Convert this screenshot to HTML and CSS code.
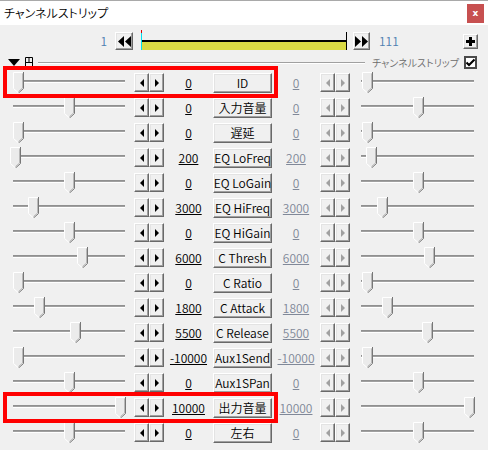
FILE: index.html
```html
<!DOCTYPE html>
<html lang="ja">
<head>
<meta charset="utf-8">
<title>チャンネルストリップ</title>
<link rel="stylesheet" href="styles.css">
</head>
<body>
<svg class="defs" width="0" height="0" aria-hidden="true">
  <symbol id="thumb" viewBox="0 0 11 21">
    <path d="M0.5 16.5V0.5H10.5V16.5L5.5 20.5Z" fill="#ebebeb"/>
    <path d="M0.5 16.5V0.5H10" fill="none" stroke="#ffffff"/>
    <path d="M10.5 0V16.5L5.5 21" fill="none" stroke="#777777"/>
    <path d="M9.5 1.5V16L5.5 19.5" fill="none" stroke="#b9b9b9"/>
    <path d="M0.5 16.5L5 20.5" fill="none" stroke="#ffffff"/>
  </symbol>
  <symbol id="tl" viewBox="0 0 4 8"><path d="M4 0V8L0 4Z"/></symbol>
  <symbol id="tr" viewBox="0 0 4 8"><path d="M0 0V8L4 4Z"/></symbol>
</svg>

<header class="titlebar">
  <span class="title">チャンネルストリップ</span>
  <span class="close">x</span>
</header>

<div class="toolbar">
  <span class="frame-num start">1</span>
  <span class="tbtn prev"><svg width="13" height="11" viewBox="0 0 13 11"><path d="M6 0V11L0 5.5Z M13 0V11L7 5.5Z"/></svg></span>
  <div class="timeline"><span class="cursor"></span></div>
  <span class="tbtn next"><svg width="13" height="11" viewBox="0 0 13 11"><path d="M0 0V11L6 5.5Z M7 0V11L13 5.5Z"/></svg></span>
  <span class="frame-num end">111</span>
  <span class="tbtn plus"><svg width="11" height="11" viewBox="0 0 11 11"><path d="M4 1H7V4H10V7H7V10H4V7H1V4H4Z"/></svg></span>
</div>

<div class="layer">
  <svg class="fold" width="12" height="7" viewBox="0 0 12 7"><path d="M0 0H12L6 7Z"/></svg>
  <svg class="mouse" width="10" height="14" viewBox="0 0 10 14"><path d="M1.5 13.5V1.5H8.5V13.5Z M1.5 6.5H8.5 M5 1.5V6.5" fill="none" stroke="#000"/></svg>
  <span class="rule"></span>
  <span class="layer-name">チャンネルストリップ</span>
  <span class="check"><svg width="9" height="9" viewBox="0 0 9 9"><path d="M0.5 4.5L3 7L8.5 1.5" fill="none" stroke="#000" stroke-width="2"/></svg></span>
</div>

<main class="rows">
  <div class="row">
    <div class="slider"><span class="track"></span><svg class="thumb" style="left:1px"><use href="#thumb"/></svg></div>
    <div class="arrows"><span class="abtn"><svg><use href="#tl"/></svg></span><span class="abtn"><svg><use href="#tr"/></svg></span></div>
    <span class="val"><span>0</span></span>
    <span class="name">ID</span>
    <span class="val off"><span>0</span></span>
    <div class="arrows off"><span class="abtn"><svg><use href="#tl"/></svg></span><span class="abtn"><svg><use href="#tr"/></svg></span></div>
    <div class="slider right"><span class="track"></span><svg class="thumb" style="left:1px"><use href="#thumb"/></svg></div>
  </div>
  <div class="row">
    <div class="slider"><span class="track"></span><svg class="thumb" style="left:52px"><use href="#thumb"/></svg></div>
    <div class="arrows"><span class="abtn"><svg><use href="#tl"/></svg></span><span class="abtn"><svg><use href="#tr"/></svg></span></div>
    <span class="val"><span>0</span></span>
    <span class="name">入力音量</span>
    <span class="val off"><span>0</span></span>
    <div class="arrows off"><span class="abtn"><svg><use href="#tl"/></svg></span><span class="abtn"><svg><use href="#tr"/></svg></span></div>
    <div class="slider right"><span class="track"></span><svg class="thumb" style="left:52px"><use href="#thumb"/></svg></div>
  </div>
  <div class="row">
    <div class="slider"><span class="track"></span><svg class="thumb" style="left:1px"><use href="#thumb"/></svg></div>
    <div class="arrows"><span class="abtn"><svg><use href="#tl"/></svg></span><span class="abtn"><svg><use href="#tr"/></svg></span></div>
    <span class="val"><span>0</span></span>
    <span class="name">遅延</span>
    <span class="val off"><span>0</span></span>
    <div class="arrows off"><span class="abtn"><svg><use href="#tl"/></svg></span><span class="abtn"><svg><use href="#tr"/></svg></span></div>
    <div class="slider right"><span class="track"></span><svg class="thumb" style="left:1px"><use href="#thumb"/></svg></div>
  </div>
  <div class="row">
    <div class="slider"><span class="track"></span><svg class="thumb" style="left:-2px"><use href="#thumb"/></svg></div>
    <div class="arrows"><span class="abtn"><svg><use href="#tl"/></svg></span><span class="abtn"><svg><use href="#tr"/></svg></span></div>
    <span class="val"><span>200</span></span>
    <span class="name">EQ LoFreq</span>
    <span class="val off"><span>200</span></span>
    <div class="arrows off"><span class="abtn"><svg><use href="#tl"/></svg></span><span class="abtn"><svg><use href="#tr"/></svg></span></div>
    <div class="slider right"><span class="track"></span><svg class="thumb" style="left:5px"><use href="#thumb"/></svg></div>
  </div>
  <div class="row">
    <div class="slider"><span class="track"></span><svg class="thumb" style="left:52px"><use href="#thumb"/></svg></div>
    <div class="arrows"><span class="abtn"><svg><use href="#tl"/></svg></span><span class="abtn"><svg><use href="#tr"/></svg></span></div>
    <span class="val"><span>0</span></span>
    <span class="name">EQ LoGain</span>
    <span class="val off"><span>0</span></span>
    <div class="arrows off"><span class="abtn"><svg><use href="#tl"/></svg></span><span class="abtn"><svg><use href="#tr"/></svg></span></div>
    <div class="slider right"><span class="track"></span><svg class="thumb" style="left:52px"><use href="#thumb"/></svg></div>
  </div>
  <div class="row">
    <div class="slider"><span class="track"></span><svg class="thumb" style="left:16px"><use href="#thumb"/></svg></div>
    <div class="arrows"><span class="abtn"><svg><use href="#tl"/></svg></span><span class="abtn"><svg><use href="#tr"/></svg></span></div>
    <span class="val"><span>3000</span></span>
    <span class="name">EQ HiFreq</span>
    <span class="val off"><span>3000</span></span>
    <div class="arrows off"><span class="abtn"><svg><use href="#tl"/></svg></span><span class="abtn"><svg><use href="#tr"/></svg></span></div>
    <div class="slider right"><span class="track"></span><svg class="thumb" style="left:16px"><use href="#thumb"/></svg></div>
  </div>
  <div class="row">
    <div class="slider"><span class="track"></span><svg class="thumb" style="left:52px"><use href="#thumb"/></svg></div>
    <div class="arrows"><span class="abtn"><svg><use href="#tl"/></svg></span><span class="abtn"><svg><use href="#tr"/></svg></span></div>
    <span class="val"><span>0</span></span>
    <span class="name">EQ HiGain</span>
    <span class="val off"><span>0</span></span>
    <div class="arrows off"><span class="abtn"><svg><use href="#tl"/></svg></span><span class="abtn"><svg><use href="#tr"/></svg></span></div>
    <div class="slider right"><span class="track"></span><svg class="thumb" style="left:52px"><use href="#thumb"/></svg></div>
  </div>
  <div class="row">
    <div class="slider"><span class="track"></span><svg class="thumb" style="left:65px"><use href="#thumb"/></svg></div>
    <div class="arrows"><span class="abtn"><svg><use href="#tl"/></svg></span><span class="abtn"><svg><use href="#tr"/></svg></span></div>
    <span class="val"><span>6000</span></span>
    <span class="name">C Thresh</span>
    <span class="val off"><span>6000</span></span>
    <div class="arrows off"><span class="abtn"><svg><use href="#tl"/></svg></span><span class="abtn"><svg><use href="#tr"/></svg></span></div>
    <div class="slider right"><span class="track"></span><svg class="thumb" style="left:63px"><use href="#thumb"/></svg></div>
  </div>
  <div class="row">
    <div class="slider"><span class="track"></span><svg class="thumb" style="left:1px"><use href="#thumb"/></svg></div>
    <div class="arrows"><span class="abtn"><svg><use href="#tl"/></svg></span><span class="abtn"><svg><use href="#tr"/></svg></span></div>
    <span class="val"><span>0</span></span>
    <span class="name">C Ratio</span>
    <span class="val off"><span>0</span></span>
    <div class="arrows off"><span class="abtn"><svg><use href="#tl"/></svg></span><span class="abtn"><svg><use href="#tr"/></svg></span></div>
    <div class="slider right"><span class="track"></span><svg class="thumb" style="left:1px"><use href="#thumb"/></svg></div>
  </div>
  <div class="row">
    <div class="slider"><span class="track"></span><svg class="thumb" style="left:22px"><use href="#thumb"/></svg></div>
    <div class="arrows"><span class="abtn"><svg><use href="#tl"/></svg></span><span class="abtn"><svg><use href="#tr"/></svg></span></div>
    <span class="val"><span>1800</span></span>
    <span class="name">C Attack</span>
    <span class="val off"><span>1800</span></span>
    <div class="arrows off"><span class="abtn"><svg><use href="#tl"/></svg></span><span class="abtn"><svg><use href="#tr"/></svg></span></div>
    <div class="slider right"><span class="track"></span><svg class="thumb" style="left:21px"><use href="#thumb"/></svg></div>
  </div>
  <div class="row">
    <div class="slider"><span class="track"></span><svg class="thumb" style="left:58px"><use href="#thumb"/></svg></div>
    <div class="arrows"><span class="abtn"><svg><use href="#tl"/></svg></span><span class="abtn"><svg><use href="#tr"/></svg></span></div>
    <span class="val"><span>5500</span></span>
    <span class="name">C Release</span>
    <span class="val off"><span>5500</span></span>
    <div class="arrows off"><span class="abtn"><svg><use href="#tl"/></svg></span><span class="abtn"><svg><use href="#tr"/></svg></span></div>
    <div class="slider right"><span class="track"></span><svg class="thumb" style="left:61px"><use href="#thumb"/></svg></div>
  </div>
  <div class="row">
    <div class="slider"><span class="track"></span><svg class="thumb" style="left:1px"><use href="#thumb"/></svg></div>
    <div class="arrows"><span class="abtn"><svg><use href="#tl"/></svg></span><span class="abtn"><svg><use href="#tr"/></svg></span></div>
    <span class="val"><span>-10000</span></span>
    <span class="name">Aux1Send</span>
    <span class="val off"><span>-10000</span></span>
    <div class="arrows off"><span class="abtn"><svg><use href="#tl"/></svg></span><span class="abtn"><svg><use href="#tr"/></svg></span></div>
    <div class="slider right"><span class="track"></span><svg class="thumb" style="left:1px"><use href="#thumb"/></svg></div>
  </div>
  <div class="row">
    <div class="slider"><span class="track"></span><svg class="thumb" style="left:52px"><use href="#thumb"/></svg></div>
    <div class="arrows"><span class="abtn"><svg><use href="#tl"/></svg></span><span class="abtn"><svg><use href="#tr"/></svg></span></div>
    <span class="val"><span>0</span></span>
    <span class="name">Aux1SPan</span>
    <span class="val off"><span>0</span></span>
    <div class="arrows off"><span class="abtn"><svg><use href="#tl"/></svg></span><span class="abtn"><svg><use href="#tr"/></svg></span></div>
    <div class="slider right"><span class="track"></span><svg class="thumb" style="left:52px"><use href="#thumb"/></svg></div>
  </div>
  <div class="row">
    <div class="slider"><span class="track"></span><svg class="thumb" style="left:103px"><use href="#thumb"/></svg></div>
    <div class="arrows"><span class="abtn"><svg><use href="#tl"/></svg></span><span class="abtn"><svg><use href="#tr"/></svg></span></div>
    <span class="val"><span>10000</span></span>
    <span class="name">出力音量</span>
    <span class="val off"><span>10000</span></span>
    <div class="arrows off"><span class="abtn"><svg><use href="#tl"/></svg></span><span class="abtn"><svg><use href="#tr"/></svg></span></div>
    <div class="slider right"><span class="track"></span><svg class="thumb" style="left:103px"><use href="#thumb"/></svg></div>
  </div>
  <div class="row">
    <div class="slider"><span class="track"></span><svg class="thumb" style="left:52px"><use href="#thumb"/></svg></div>
    <div class="arrows"><span class="abtn"><svg><use href="#tl"/></svg></span><span class="abtn"><svg><use href="#tr"/></svg></span></div>
    <span class="val"><span>0</span></span>
    <span class="name">左右</span>
    <span class="val off"><span>0</span></span>
    <div class="arrows off"><span class="abtn"><svg><use href="#tl"/></svg></span><span class="abtn"><svg><use href="#tr"/></svg></span></div>
    <div class="slider right"><span class="track"></span><svg class="thumb" style="left:52px"><use href="#thumb"/></svg></div>
  </div>
</main>

<div class="mark mark-top"></div>
<div class="mark mark-bottom"></div>
</body>
</html>
```

FILE: styles.css
```css
html, body {
  margin: 0;
  padding: 0;
}
body {
  width: 488px;
  height: 450px;
  overflow: hidden;
  position: relative;
  background: #f0f0f0;
  font-family: "Noto Sans CJK JP", "Noto Sans", sans-serif;
  font-size: 12px;
  font-weight: 350;
  color: #000;
}
.defs {
  position: absolute;
  width: 0;
  height: 0;
  overflow: hidden;
}

/* title bar */
.titlebar {
  height: 25px;
  box-sizing: border-box;
  border-top: 1px solid #a9a9a9;
  background: #fff;
  display: flex;
  align-items: center;
  padding-left: 4px;
}
.title {
  font-size: 12px;
  font-feature-settings: "palt";
  line-height: 1;
}
.close {
  margin-left: auto;
  margin-right: 4px;
  width: 17px;
  height: 19px;
  background: #c75050;
  color: #fff;
  font-family: "DejaVu Sans", sans-serif;
  font-weight: bold;
  font-size: 9px;
  display: flex;
  align-items: center;
  justify-content: center;
}

/* raised 3D surfaces */
.tbtn, .abtn, .name {
  box-sizing: border-box;
  background: #f0f0f0;
  border: 1px solid;
  border-color: #ffffff #696969 #696969 #ffffff;
  box-shadow: inset -1px -1px #a0a0a0, inset 1px 1px #e3e3e3;
  display: flex;
  align-items: center;
  justify-content: center;
}

/* toolbar / timeline */
.toolbar {
  height: 30px;
  box-sizing: border-box;
  padding-top: 2px;
  display: flex;
  align-items: center;
}
.frame-num {
  color: #4d7fb0;
  font-size: 12px;
  line-height: 1;
}
.frame-num.start {
  width: 107px;
  text-align: right;
}
.tbtn {
  width: 18px;
  height: 18px;
}
.tbtn svg {
  fill: #000;
  display: block;
}
.tbtn.prev {
  margin-left: 8px;
}
.timeline {
  margin-left: 8px;
  width: 206px;
  height: 18px;
  box-sizing: border-box;
  position: relative;
  border-left: 1px solid #00e0f0;
  border-right: 1px solid #000;
  background: linear-gradient(to bottom, transparent 0, transparent 8px, #000 8px, #000 10px, #d9d944 10px);
}
.cursor {
  position: absolute;
  left: -1px;
  top: -2px;
  width: 1px;
  height: 3px;
  background: #e00000;
}
.tbtn.next {
  margin-left: 6px;
  width: 17px;
}
.frame-num.end {
  margin-left: 9px;
}
.tbtn.plus {
  margin-left: auto;
  margin-right: 10px;
  width: 15px;
  height: 15px;
}

/* layer header */
.layer {
  height: 15px;
  display: flex;
  align-items: center;
  padding-left: 8px;
}
.fold {
  display: block;
  fill: #000;
}
.mouse {
  display: block;
  margin-left: 4px;
}
.rule {
  flex: 1;
  margin-left: 4px;
  height: 1px;
  background: #a0a0a0;
  border-bottom: 1px solid #fff;
}
.layer-name {
  margin-left: 7px;
  font-size: 10px;
  font-feature-settings: "palt";
  color: #6b6b6b;
  line-height: 1;
}
.check {
  margin-left: 5px;
  margin-right: 11px;
  width: 13px;
  height: 13px;
  box-sizing: border-box;
  border: 2px solid #4a4a4a;
  background: #fff;
  display: flex;
  align-items: center;
  justify-content: center;
}
.check svg {
  display: block;
}

/* parameter rows */
.row {
  height: 25px;
  display: flex;
  align-items: center;
}
.slider {
  position: relative;
  width: 114px;
  height: 25px;
  margin-left: 12px;
}
.slider.right {
  margin-left: 11px;
}
.track {
  display: block;
  margin: 10px 1px 0;
  height: 1px;
  border-top: 1px solid #909090;
  background: #a0a0a0;
  border-bottom: 1px solid #ffffff;
}
.slider.right .track {
  margin: 10px 1px 0 0;
}
.thumb {
  position: absolute;
  top: 2px;
  width: 11px;
  height: 21px;
}
.arrows {
  display: flex;
  margin-left: 8px;
}
.arrows.off {
  margin-left: 0;
}
.abtn {
  width: 15px;
  height: 19px;
}
.abtn svg {
  display: block;
  width: 4px;
  height: 8px;
  fill: #000;
}
.arrows.off .abtn svg {
  fill: #a0a0a0;
}
.val {
  width: 49px;
  text-align: center;
  line-height: 1;
  color: #000;
}
.val span {
  text-decoration: underline;
}
.val.off {
  width: 48px;
  color: #808898;
}
.name {
  width: 59px;
  height: 20px;
  font-size: 12px;
  line-height: 1;
  white-space: nowrap;
  overflow: hidden;
  color: #000;
}

/* annotation highlights */
.mark {
  position: absolute;
  left: 3px;
  width: 275px;
  box-sizing: border-box;
  border: 4px solid #ff0000;
}
.mark-top {
  top: 66px;
  height: 32px;
}
.mark-bottom {
  top: 392px;
  height: 31px;
}
```
